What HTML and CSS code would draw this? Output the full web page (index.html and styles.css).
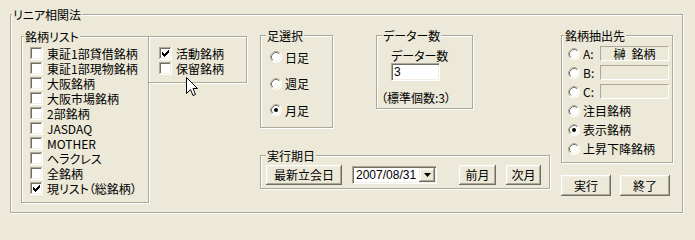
FILE: index.html
```html
<!DOCTYPE html>
<html lang="ja">
<head>
<meta charset="utf-8">
<title>リニア相関法</title>
<link rel="stylesheet" href="styles.css">
</head>
<body>
<svg class="defs" width="0" height="0" aria-hidden="true">
  <defs>
    <symbol id="cb" viewBox="0 0 13 13">
      <path fill="#aca899" d="M0 0h12v1H1v11H0z"/>
      <path fill="#716f64" d="M1 1h10v1H2v9H1z"/>
      <path fill="#ffffff" d="M12 0h1v13H0v-1h12z"/>
      <path fill="#f1efe2" d="M11 1h1v11H1v-1h10z"/>
      <rect x="2" y="2" width="9" height="9" fill="#ffffff"/>
    </symbol>
    <symbol id="ck" viewBox="0 0 13 13">
      <path fill="#000" d="M9 3h1v1H9zM8 4h2v1H8zM3 5h1v1H3zM7 5h3v1H7zM3 6h2v1H3zM6 6h3v1H6zM3 7h5v1H3zM4 8h3v1H4zM5 9h1v1H5z"/>
    </symbol>
    <symbol id="rd" viewBox="0 0 12 12">
      <circle cx="6" cy="6" r="6" fill="#ffffff"/>
      <path d="M2.11 9.89A5.5 5.5 0 0 1 9.89 2.11" fill="none" stroke="#aca899"/>
      <path d="M2.82 9.18A4.5 4.5 0 0 1 9.18 2.82" fill="none" stroke="#716f64"/>
      <path d="M9.18 2.82A4.5 4.5 0 0 1 2.82 9.18" fill="none" stroke="#f1efe2"/>
    </symbol>
    <symbol id="dot" viewBox="0 0 12 12">
      <circle cx="6" cy="6" r="2" fill="#000"/>
    </symbol>
  </defs>
</svg>

<div class="group outer">
  <div class="legend lg-outer">リニア相関法</div>
  <div class="main">
    <div class="col1">
      <div class="group list">
        <div class="legend lg-list">銘柄リスト</div>
        <ul class="checks list-items">
          <li><svg class="cb"><use href="#cb"/></svg>東証1部貸借銘柄</li>
          <li><svg class="cb"><use href="#cb"/></svg>東証1部現物銘柄</li>
          <li><svg class="cb"><use href="#cb"/></svg>大阪銘柄</li>
          <li><svg class="cb"><use href="#cb"/></svg>大阪市場銘柄</li>
          <li><svg class="cb"><use href="#cb"/></svg>2部銘柄</li>
          <li><svg class="cb"><use href="#cb"/></svg>JASDAQ</li>
          <li><svg class="cb"><use href="#cb"/></svg>MOTHER</li>
          <li><svg class="cb"><use href="#cb"/></svg>ヘラクレス</li>
          <li><svg class="cb"><use href="#cb"/></svg>全銘柄</li>
          <li><svg class="cb"><use href="#cb"/><use href="#ck"/></svg>現リスト（総銘柄）</li>
        </ul>
      </div>
      <div class="group panel">
        <ul class="checks">
          <li><svg class="cb"><use href="#cb"/><use href="#ck"/></svg>活動銘柄</li>
          <li><svg class="cb"><use href="#cb"/></svg>保留銘柄</li>
        </ul>
      </div>
    </div>

    <div class="col2">
      <div class="row-top">
        <div class="group ashi">
          <div class="legend lg-ashi">足選択</div>
          <ul class="radios ashi-items">
            <li><svg class="rd"><use href="#rd"/></svg>日足</li>
            <li><svg class="rd"><use href="#rd"/></svg>週足</li>
            <li><svg class="rd"><use href="#rd"/><use href="#dot"/></svg>月足</li>
          </ul>
        </div>
        <div class="group data">
          <div class="legend lg-data">データー数</div>
          <div class="data-label">データー数</div>
          <input class="data-input" type="text" value="3">
          <div class="data-note">（標準個数:3）</div>
        </div>
      </div>
      <div class="group kijitsu">
        <div class="legend lg-kijitsu">実行期日</div>
        <div class="kijitsu-row">
          <button class="btn btn-latest">最新立会日</button>
          <div class="combo">
            <span class="combo-text">2007/08/31</span>
            <span class="combo-btn"><svg class="tri" width="7" height="4" viewBox="0 0 7 4"><path d="M0 0h7L3.5 4z" fill="#000"/></svg></span>
          </div>
          <button class="btn btn-prev">前月</button>
          <button class="btn btn-next">次月</button>
        </div>
      </div>
    </div>

    <div class="col3">
      <div class="group chushutsu">
        <div class="legend lg-chu">銘柄抽出先</div>
        <ul class="radios chu-items">
          <li><svg class="rd"><use href="#rd"/></svg><span class="abc">A:</span><span class="field">榊&ensp;銘柄</span></li>
          <li><svg class="rd"><use href="#rd"/></svg><span class="abc">B:</span><span class="field"></span></li>
          <li><svg class="rd"><use href="#rd"/></svg><span class="abc">C:</span><span class="field"></span></li>
          <li><svg class="rd"><use href="#rd"/></svg>注目銘柄</li>
          <li><svg class="rd"><use href="#rd"/><use href="#dot"/></svg>表示銘柄</li>
          <li><svg class="rd"><use href="#rd"/></svg>上昇下降銘柄</li>
        </ul>
      </div>
      <div class="btn-row">
        <button class="btn btn-main">実行</button>
        <button class="btn btn-main">終了</button>
      </div>
    </div>
  </div>
</div>

<svg class="cursor" width="13" height="21" viewBox="0 0 13 21" aria-hidden="true">
  <path d="M0.5 0.5V16.5L4.5 12.5L7 18.5L9.5 17.5L7 11.5H11.5Z" fill="#fff" stroke="#000" stroke-width="1" stroke-linejoin="miter"/>
</svg>
</body>
</html>
```

FILE: styles.css
```css
* {
  box-sizing: border-box;
  margin: 0;
  padding: 0;
}

html, body {
  background: #ece9d8;
}

body {
  width: 695px;
  height: 225px;
  overflow: hidden;
  position: relative;
  font-family: "Noto Sans CJK JP", "Noto Sans", sans-serif;
  font-size: 12px;
  line-height: 15px;
  color: #000;
  font-feature-settings: "palt" 1;
}

.defs {
  position: absolute;
  width: 0;
  height: 0;
  overflow: hidden;
}

/* etched group box */
.group {
  border: 1px solid #aca899;
  box-shadow: inset 1px 1px 0 #fff, 1px 1px 0 #fff;
}

.legend {
  display: block;
  width: max-content;
  height: 14px;
  line-height: 14px;
  margin-top: -7px;
  padding: 0 1px;
  background: #ece9d8;
  white-space: nowrap;
}

.outer {
  margin: 14px 0 0 10px;
  width: 673px;
  height: 199px;
}

.lg-outer { margin-left: 1px; }

.main {
  display: flex;
  align-items: flex-start;
  padding-left: 10px;
  margin-top: 13px;
}

/* column 1 */
.col1 {
  display: flex;
  align-items: flex-start;
  margin-top: 1px;
}

.list {
  width: 128px;
  height: 167px;
}

.lg-list { margin-left: 2px; }

.checks {
  list-style: none;
}

.checks li {
  display: flex;
  align-items: center;
  height: 15px;
  white-space: nowrap;
}

.list-items {
  margin-top: 2px;
  padding-left: 8px;
}

.cb {
  width: 13px;
  height: 13px;
  flex: none;
  margin-right: 4px;
}

.panel {
  width: 99px;
  height: 47px;
  margin-left: -1px;
  padding: 9px 0 0 10px;
}

/* column 2 */
.col2 {
  width: 290px;
  margin-left: 13px;
}

.row-top {
  display: flex;
  align-items: flex-start;
}

.ashi {
  width: 73px;
  height: 93px;
}

.lg-ashi { margin-left: 5px; }

.radios {
  list-style: none;
}

.radios li {
  display: flex;
  align-items: center;
  white-space: nowrap;
}

.rd {
  width: 12px;
  height: 12px;
  flex: none;
  margin-right: 3px;
}

.ashi-items {
  margin-top: 7.5px;
  padding-left: 9px;
}

.ashi-items li {
  height: 13px;
  margin-bottom: 13.5px;
}

.data {
  width: 97px;
  height: 74px;
  margin-left: 43px;
}

.lg-data { margin-left: 5px; }

.data-label {
  height: 14px;
  line-height: 14px;
  margin: 6px 0 0 14px;
}

.data-input {
  display: block;
  width: 49px;
  height: 18px;
  margin-left: 14px;
  padding: 0 0 0 2px;
  font: 12px "Liberation Sans", sans-serif;
  line-height: 14px;
  color: #000;
  background: #fff;
  border: 1px solid;
  border-color: #aca899 #fff #fff #aca899;
  box-shadow: inset 1px 1px 0 #716f64, inset -1px -1px 0 #f1efe2;
  outline: none;
}

.data-note {
  height: 14px;
  line-height: 14px;
  margin: 10px 0 0 4px;
  white-space: nowrap;
}

.kijitsu {
  width: 290px;
  height: 34px;
  margin-top: 27px;
}

.lg-kijitsu { margin-left: 5px; }

.kijitsu-row {
  display: flex;
  align-items: center;
  margin-top: 2px;
  padding-left: 5px;
  height: 20px;
}

/* buttons */
.btn {
  font: inherit;
  color: #000;
  background: #ece9d8;
  border: none;
  box-shadow: inset -1px -1px 0 #716f64, inset 1px 1px 0 #fff,
              inset -2px -2px 0 #aca899, inset 2px 2px 0 #f1efe2;
  display: flex;
  align-items: center;
  justify-content: center;
  line-height: 14px;
  padding: 0;
  flex: none;
}

.btn-latest { width: 76px; height: 20px; }
.btn-prev { width: 37px; height: 20px; margin-left: 22px; }
.btn-next { width: 35px; height: 20px; margin-left: 10px; }

.combo {
  display: flex;
  align-items: center;
  width: 85px;
  height: 18px;
  margin-left: 10px;
  background: #fff;
  border: 1px solid;
  border-color: #aca899 #fff #fff #aca899;
  box-shadow: inset 1px 1px 0 #716f64, inset -1px -1px 0 #f1efe2;
  padding: 1px 1px 1px 2px;
}

.combo-text {
  flex: 1;
  font-family: "Liberation Sans", sans-serif;
  line-height: 14px;
  white-space: nowrap;
  padding-left: 1px;
}

.combo-btn {
  width: 16px;
  height: 14px;
  flex: none;
  background: #ece9d8;
  box-shadow: inset -1px -1px 0 #716f64, inset 1px 1px 0 #f1efe2,
              inset -2px -2px 0 #aca899, inset 2px 2px 0 #fff;
  display: flex;
  align-items: center;
  justify-content: center;
}

.tri { display: block; }

/* column 3 */
.col3 {
  margin-left: 11px;
}

.chushutsu {
  width: 112px;
  height: 128px;
}

.lg-chu { margin-left: 2px; }

.chu-items {
  margin-top: 1px;
  padding-left: 6px;
}

.chu-items li {
  height: 19px;
}

.abc {
  width: 17px;
  flex: none;
}

.field {
  width: 69px;
  height: 15px;
  line-height: 13px;
  border: 1px solid;
  border-color: #aca899 #fff #fff #aca899;
  text-align: center;
  white-space: nowrap;
}

.btn-row {
  display: flex;
  gap: 9px;
  margin-top: 12px;
}

.btn-main {
  width: 50px;
  height: 21px;
}

/* mouse pointer drawn over the panel */
.cursor {
  position: absolute;
  left: 186px;
  top: 77px;
}
```
